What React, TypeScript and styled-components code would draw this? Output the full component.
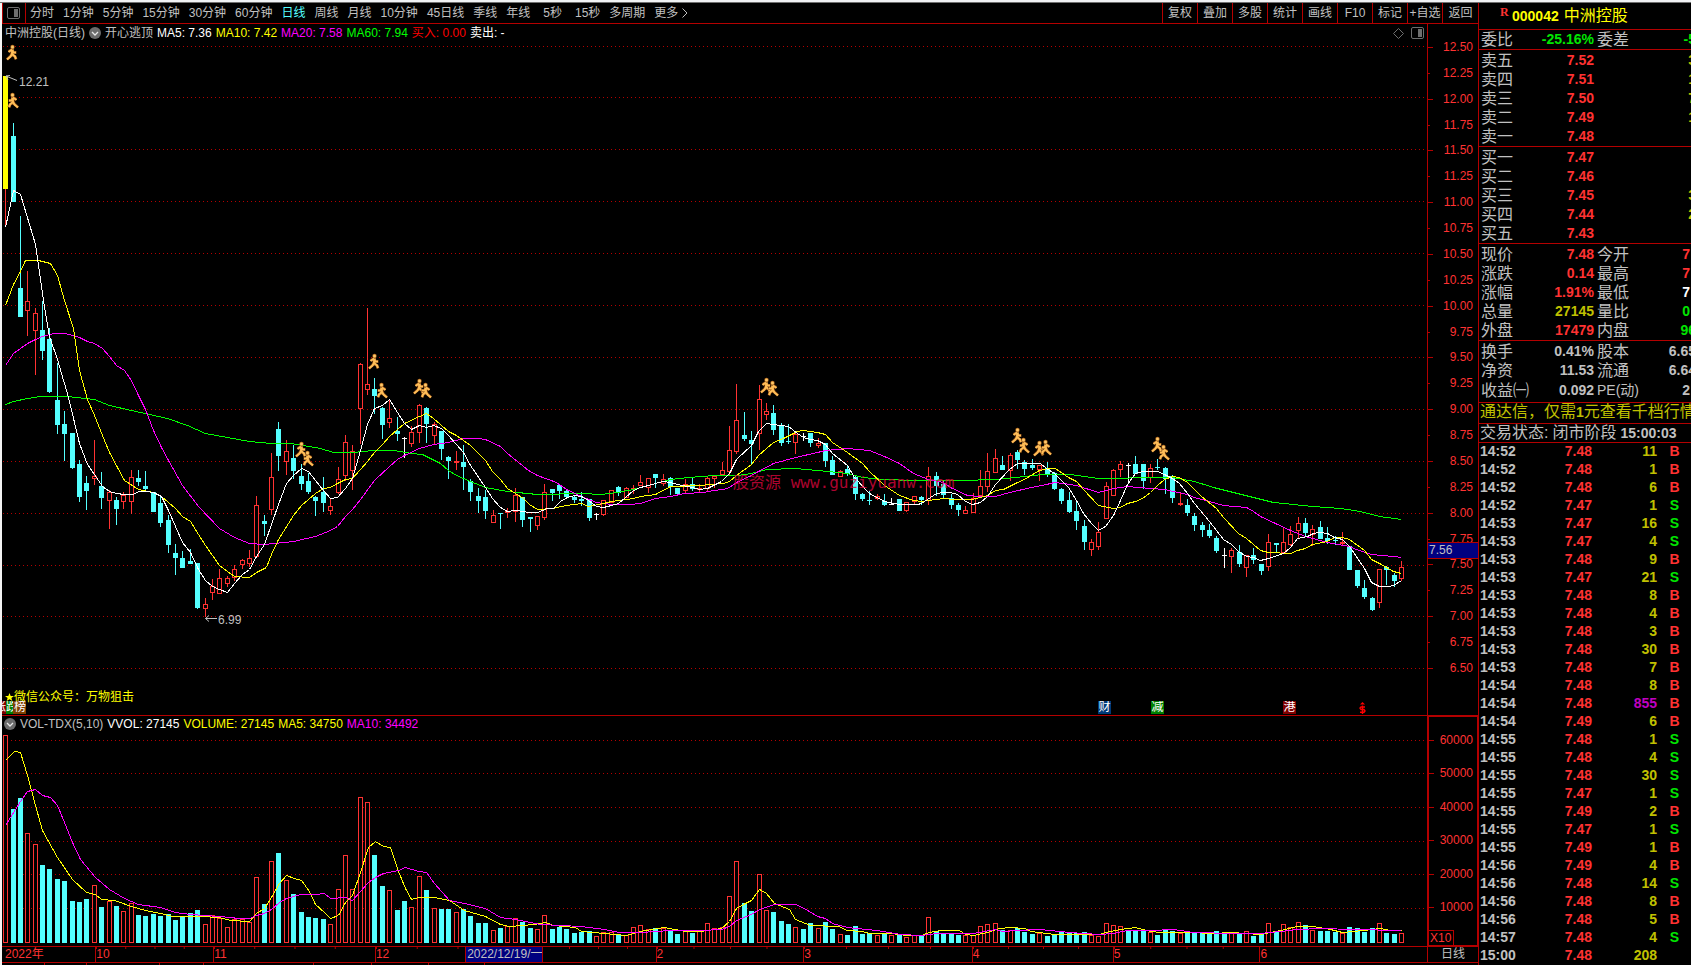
import React from "react";
import styled, { createGlobalStyle } from "styled-components";

const c = {
  line: "#b40000",
  grid: "#b40000",
  up: "#ff3232",
  down: "#54ffff",
  text: "#c0c0c0",
  yellow: "#ffff00",
  amount: "#c0c000",
  magenta: "#ff00ff",
  green: "#00e600",
  lime: "#00ff00",
};

const Global = createGlobalStyle`
  * { box-sizing: border-box; }
  html, body, #root { height: 100%; }
  body {
    margin: 0;
    background: #000;
    color: ${c.text};
    font: 12px/16px "Liberation Sans", "Noto Sans CJK SC", sans-serif;
    overflow: hidden;
  }
`;

/* ---------- market data ---------- */

type Kind = "u" | "d" | "n" | "p" | "y";
// kind, high, body top, body bottom, low, volume top
type Day = [Kind, number, number, number, number, number];

const days: Day[] = [
  ["y", 76, 76, 189, 225, 735], ["d", 123, 136, 202, 202, 809], ["d", 216, 288, 317, 317, 798],
  ["u", 271, 301, 311, 336, 833], ["u", 308, 313, 331, 375, 844], ["d", 301, 330, 351, 360, 865],
  ["d", 328, 339, 392, 393, 869], ["d", 363, 400, 425, 434, 879], ["d", 411, 424, 434, 461, 881],
  ["d", 433, 433, 468, 469, 901], ["d", 460, 464, 497, 502, 902], ["d", 476, 483, 491, 510, 899],
  ["u", 440, 476, 479, 485, 885], ["d", 472, 486, 498, 509, 907], ["u", 490, 492, 501, 529, 901],
  ["d", 497, 500, 509, 525, 906], ["u", 492, 495, 502, 509, 911], ["u", 470, 477, 502, 514, 903],
  ["d", 470, 478, 482, 486, 915], ["d", 471, 486, 489, 490, 916], ["d", 492, 492, 512, 512, 914],
  ["d", 496, 503, 523, 527, 916], ["d", 515, 520, 545, 553, 914], ["d", 544, 553, 558, 575, 920],
  ["d", 551, 558, 568, 568, 917], ["d", 549, 561, 564, 564, 913], ["d", 563, 563, 608, 609, 910],
  ["u", 598, 604, 609, 617, 924], ["u", 579, 586, 593, 600, 915], ["u", 569, 578, 594, 594, 918],
  ["u", 576, 578, 584, 587, 927], ["u", 565, 569, 578, 581, 919], ["u", 559, 560, 565, 569, 919],
  ["u", 550, 558, 564, 567, 922], ["u", 496, 505, 557, 557, 877], ["d", 515, 521, 524, 536, 904],
  ["u", 453, 477, 510, 515, 861], ["d", 422, 429, 456, 471, 853], ["u", 440, 451, 462, 475, 880],
  ["d", 445, 458, 471, 479, 894], ["d", 464, 476, 484, 490, 912], ["d", 473, 481, 492, 494, 917],
  ["d", 496, 497, 501, 516, 918], ["d", 477, 492, 503, 512, 919], ["u", 499, 506, 511, 515, 924],
  ["u", 467, 479, 493, 494, 889], ["u", 435, 442, 476, 481, 855], ["u", 445, 451, 471, 490, 889],
  ["u", 363, 364, 409, 444, 797], ["u", 308, 384, 390, 395, 802], ["d", 378, 389, 396, 414, 855],
  ["d", 407, 408, 425, 439, 886], ["u", 399, 418, 423, 428, 890], ["d", 417, 431, 434, 441, 910],
  ["n", 437, 438, 439, 458, 901], ["u", 426, 432, 444, 447, 907], ["u", 404, 405, 433, 443, 876],
  ["d", 407, 408, 424, 443, 890], ["u", 422, 424, 436, 444, 908], ["d", 431, 431, 449, 460, 909],
  ["d", 456, 457, 461, 479, 909], ["u", 451, 461, 463, 470, 912], ["d", 445, 462, 467, 490, 909],
  ["d", 479, 481, 492, 501, 916], ["d", 488, 496, 501, 513, 923], ["d", 490, 497, 511, 519, 923],
  ["u", 510, 515, 523, 523, 930], ["d", 513, 513, 514, 529, 928], ["u", 508, 511, 513, 518, 926],
  ["u", 488, 495, 512, 522, 918], ["d", 497, 497, 520, 527, 922], ["d", 517, 517, 519, 532, 928],
  ["u", 516, 516, 526, 530, 929], ["u", 484, 492, 518, 520, 915], ["d", 489, 489, 493, 501, 929],
  ["d", 484, 485, 491, 499, 927], ["d", 489, 491, 497, 499, 929], ["d", 495, 497, 500, 503, 933],
  ["d", 492, 499, 501, 506, 932], ["d", 499, 499, 518, 521, 931], ["p", 513, 514, 515, 520, 936],
  ["u", 500, 500, 515, 516, 932], ["u", 490, 490, 503, 503, 932], ["d", 486, 487, 493, 496, 935],
  ["u", 487, 488, 498, 498, 935], ["u", 485, 488, 490, 494, 927], ["u", 475, 482, 486, 486, 925],
  ["u", 478, 478, 488, 493, 929], ["d", 474, 474, 478, 488, 928], ["u", 474, 479, 484, 486, 928],
  ["d", 477, 478, 487, 495, 930], ["d", 488, 488, 494, 496, 934], ["u", 479, 484, 491, 494, 931],
  ["d", 477, 484, 489, 491, 933], ["u", 484, 488, 490, 493, 931], ["u", 476, 478, 489, 492, 923],
  ["u", 475, 476, 479, 488, 928], ["u", 462, 470, 475, 475, 927], ["u", 426, 450, 472, 475, 896],
  ["u", 384, 420, 452, 454, 861], ["d", 412, 435, 439, 441, 903], ["d", 431, 440, 444, 465, 911],
  ["u", 385, 399, 434, 450, 874], ["u", 403, 411, 415, 420, 910], ["d", 405, 413, 430, 435, 912],
  ["d", 423, 425, 443, 446, 921], ["d", 424, 441, 442, 444, 924], ["u", 432, 434, 443, 454, 927],
  ["n", 433, 436, 437, 441, 929], ["d", 433, 433, 443, 447, 923], ["u", 438, 443, 446, 448, 928],
  ["d", 443, 443, 461, 467, 922], ["d", 456, 460, 475, 475, 929], ["u", 470, 471, 477, 477, 934],
  ["d", 466, 469, 474, 476, 935], ["d", 476, 477, 494, 500, 926], ["d", 493, 494, 499, 501, 934],
  ["d", 491, 500, 501, 505, 933], ["u", 494, 496, 499, 500, 935], ["d", 494, 501, 505, 506, 934],
  ["p", 498, 504, 505, 505, 935], ["d", 499, 499, 511, 511, 935], ["u", 502, 502, 511, 512, 937],
  ["u", 496, 496, 502, 505, 935], ["d", 496, 497, 500, 505, 936], ["u", 467, 476, 501, 505, 917],
  ["d", 472, 476, 486, 496, 931], ["d", 481, 484, 495, 499, 933], ["d", 494, 498, 505, 509, 933],
  ["d", 503, 505, 510, 516, 935], ["u", 506, 510, 514, 514, 935], ["u", 493, 498, 513, 513, 935],
  ["u", 470, 486, 496, 497, 926], ["u", 453, 471, 487, 492, 924], ["u", 449, 458, 473, 473, 923],
  ["d", 456, 465, 470, 470, 930], ["u", 453, 455, 471, 481, 930], ["d", 450, 452, 460, 469, 928],
  ["d", 460, 462, 469, 475, 932], ["d", 459, 465, 468, 470, 934], ["u", 465, 465, 470, 481, 933],
  ["d", 462, 468, 474, 477, 936], ["d", 472, 473, 489, 490, 934], ["d", 488, 489, 501, 504, 932],
  ["d", 492, 500, 512, 513, 933], ["d", 501, 511, 521, 530, 933], ["d", 520, 526, 542, 550, 932],
  ["u", 539, 542, 550, 556, 935], ["u", 522, 532, 547, 550, 936], ["u", 482, 486, 519, 519, 923],
  ["u", 469, 470, 496, 496, 925], ["u", 461, 464, 470, 477, 926], ["n", 463, 465, 466, 483, 931],
  ["d", 456, 464, 474, 474, 931], ["d", 464, 464, 481, 489, 931], ["u", 464, 468, 478, 483, 932],
  ["d", 459, 467, 468, 470, 935], ["d", 467, 468, 479, 494, 929], ["d", 475, 476, 498, 503, 931],
  ["u", 492, 503, 505, 506, 933], ["d", 499, 505, 513, 516, 933], ["d", 513, 516, 525, 531, 933],
  ["d", 522, 525, 530, 537, 933], ["d", 524, 530, 536, 538, 933], ["d", 536, 538, 551, 553, 931],
  ["n", 548, 555, 556, 568, 933], ["u", 548, 550, 557, 573, 933], ["d", 545, 552, 564, 567, 933],
  ["u", 555, 555, 568, 577, 931], ["d", 548, 555, 560, 564, 936], ["d", 564, 564, 571, 575, 934],
  ["u", 534, 542, 567, 571, 923], ["d", 543, 543, 545, 553, 932], ["u", 528, 542, 553, 553, 924],
  ["u", 526, 534, 545, 546, 927], ["u", 517, 523, 531, 539, 922], ["d", 518, 523, 533, 536, 925],
  ["u", 525, 529, 535, 546, 930], ["d", 521, 527, 539, 539, 931], ["d", 527, 538, 541, 544, 931],
  ["d", 536, 540, 541, 545, 932], ["u", 532, 542, 544, 545, 933], ["d", 546, 546, 570, 570, 927],
  ["d", 570, 570, 586, 588, 928], ["d", 580, 588, 597, 599, 932], ["d", 597, 598, 610, 611, 928],
  ["u", 569, 569, 603, 608, 923], ["d", 566, 567, 570, 585, 933], ["d", 573, 575, 581, 587, 934],
  ["u", 561, 567, 579, 581, 933],
];

const dayX = (i: number) => Math.floor(5.65 + 7.386 * i);

const ma5 =
  "5,227 13,190 20,194 35,244 43,300 49,336 57,359 68,397 79,443 87,464 94,474 102,486 109,491 116,493 124,494 133,494 138,491 145,491 153,492 161,496 168,510 182,542 190,552 198,569 205,580 212,586 219,589 227,592 234,583 242,574 249,569 256,556 264,544 278,504 286,483 293,475 301,468 308,471 315,480 323,490 330,498 337,497 345,488 352,478 360,450 367,424 374,408 382,405 389,399 397,412 404,423 411,429 419,425 426,427 433,425 441,428 448,435 463,452 470,465 485,487 492,498 500,507 507,511 515,510 523,511 528,512 537,512 547,508 553,508 560,501 567,497 574,495 581,496 588,500 596,506 603,507 611,505 618,503 625,497 633,490 640,487 648,485 655,483 662,481 670,482 677,484 692,487 699,489 707,488 721,481 729,473 736,459 751,445 758,431 766,423 780,425 788,426 797,433 803,437 810,439 817,440 825,444 832,453 847,465 854,477 869,493 884,501 899,504 917,504 921,503 930,497 936,493 943,492 950,492 957,494 965,501 972,504 980,502 987,496 995,484 1009,469 1017,463 1023,463 1040,463 1046,468 1054,473 1061,480 1068,487 1076,500 1083,513 1091,523 1098,530 1105,526 1113,515 1120,500 1127,484 1135,473 1142,471 1157,471 1164,474 1172,478 1179,483 1187,493 1194,503 1209,521 1223,539 1231,544 1238,551 1246,556 1253,557 1260,560 1268,558 1283,553 1290,547 1297,538 1307,536 1313,533 1319,532 1327,533 1334,537 1342,539 1349,546 1364,568 1371,582 1379,586 1388,586 1393,585 1401,580";
const ma10 =
  "5,305 13,284 20,271 25,260 38,260 50,263 57,275 64,300 73,328 79,370 87,399 94,415 102,435 109,452 124,480 138,489 153,492 161,496 175,508 182,516 190,521 198,534 205,545 219,565 227,571 234,576 249,577 256,572 266,567 271,554 278,539 293,515 301,505 315,493 323,488 330,487 337,483 345,479 352,478 367,461 374,452 382,444 389,436 404,423 419,416 426,413 433,418 448,431 456,435 470,445 485,460 492,471 500,479 507,488 515,493 523,498 529,504 537,509 552,508 566,505 581,503 588,506 603,503 611,501 633,498 640,496 655,494 670,486 699,485 723,483 729,481 736,475 751,464 758,455 773,442 783,438 797,431 803,430 817,432 825,434 832,442 847,452 862,463 869,471 884,485 899,495 913,500 921,501 928,500 943,498 953,499 972,499 987,495 995,490 1003,489 1017,482 1024,479 1039,470 1048,468 1055,468 1068,477 1076,481 1083,489 1098,505 1113,508 1120,507 1127,503 1135,501 1142,498 1150,492 1157,485 1164,479 1172,476 1179,477 1187,482 1201,496 1216,508 1223,517 1238,533 1246,538 1260,550 1268,552 1290,553 1297,550 1305,548 1312,544 1327,541 1334,537 1342,537 1349,539 1364,550 1371,559 1379,563 1393,571 1401,573";
const ma20 =
  "5,365 13,353 27,343 35,339 42,336 53,333 65,333 79,337 87,341 94,343 102,348 109,356 116,365 124,370 131,380 138,395 145,409 153,430 161,447 168,460 182,485 198,506 219,528 234,537 249,543 264,544 293,541 315,536 330,530 337,526 345,516 352,509 360,499 374,480 389,466 397,459 404,455 419,448 433,444 448,442 463,438 478,438 485,439 500,446 507,453 528,470 537,475 556,482 566,489 581,496 596,502 611,504 629,504 640,503 655,498 670,496 684,493 703,492 713,490 723,489 729,487 736,482 751,475 758,471 773,463 795,457 817,452 825,450 847,448 869,450 884,456 899,463 913,473 928,479 943,482 950,487 967,495 980,496 995,496 1009,492 1031,487 1046,484 1054,482 1063,483 1076,485 1098,492 1113,488 1127,486 1150,488 1164,489 1187,494 1194,497 1209,501 1223,505 1246,507 1253,511 1260,516 1275,523 1290,530 1305,536 1327,542 1349,546 1356,549 1371,554 1393,556 1401,557";
const ma60 =
  "5,404 13,401 27,398 40,396 67,396 94,399 109,405 131,410 167,418 187,425 205,433 227,437 249,441 271,443 290,443 308,446 320,448 333,452 353,452 373,450 393,450 411,453 422,454 440,463 448,470 456,475 470,481 485,487 507,491 537,494 583,493 600,494 617,492 633,489 655,483 670,479 688,477 714,475 737,475 751,473 766,469 795,468 817,470 847,473 862,477 884,479 913,480 960,480 995,479 1024,476 1042,474 1070,474 1098,478 1120,478 1138,477 1172,477 1194,481 1213,487 1245,495 1273,502 1293,504 1312,506 1340,508 1360,511 1379,516 1401,519";
const vol5 =
  "5,760 14,751 20,752 27,775 35,805 42,830 57,857 72,879 86,892 95,894 101,899 114,900 131,906 145,910 160,913 173,916 200,916 219,917 230,920 249,921 256,913 264,908 271,897 279,883 286,875 294,878 301,880 309,891 315,904 324,912 330,918 338,915 345,902 352,895 360,872 368,847 375,841 383,846 390,847 398,871 405,888 411,899 418,897 434,897 449,900 464,910 485,916 500,924 509,926 534,924 545,922 553,925 575,927 581,931 604,933 626,935 640,931 664,927 685,931 700,931 721,928 729,921 736,908 745,903 751,900 759,889 766,893 774,903 789,909 795,919 810,925 838,926 847,930 862,931 869,933 891,933 906,935 921,935 929,932 940,930 959,930 965,934 973,935 987,932 999,928 1010,927 1024,928 1031,931 1054,934 1076,934 1099,934 1105,932 1120,929 1135,927 1150,931 1160,932 1190,932 1213,933 1231,932 1260,934 1280,930 1297,926 1312,926 1330,929 1342,932 1363,930 1380,928 1390,930 1401,930";
const vol10 =
  "5,825 20,801 27,791 35,789 42,795 50,797 57,805 64,822 72,842 80,859 95,877 109,889 124,898 138,904 160,907 175,912 190,914 219,916 239,918 249,918 256,915 264,913 271,909 279,902 286,898 300,894 315,894 324,893 330,898 345,897 352,900 360,891 368,882 375,877 383,873 398,870 405,867 418,871 426,872 434,883 449,900 464,903 485,908 500,917 515,919 540,924 581,926 604,929 619,932 640,932 670,930 700,930 721,929 729,926 736,920 751,914 759,909 774,904 795,904 804,908 817,916 825,918 832,923 847,927 876,930 900,934 921,935 936,933 973,933 995,929 1002,931 1017,930 1039,929 1069,932 1099,934 1113,933 1127,930 1150,930 1173,929 1193,932 1233,933 1260,933 1280,931 1297,929 1320,928 1353,929 1401,930";

const priceGrid = [46, 97, 149, 201, 253, 305, 357, 409, 461, 513, 565, 616, 668];
const volumeGrid = [740, 773, 807, 841, 874, 908];

// centre of each figure and the way it runs
const runners: [number, number, boolean][] = [
  [12, 53, false], [13, 101, true], [301, 450, false], [308, 459, true], [374, 362, false],
  [382, 391, true], [419, 387, false], [426, 391, true], [766, 386, false], [773, 389, true],
  [1017, 436, false], [1024, 446, true], [1039, 449, false], [1046, 448, true],
  [1157, 445, false], [1164, 453, true],
];

const periods = [
  "分时", "1分钟", "5分钟", "15分钟", "30分钟", "60分钟", "日线", "周线", "月线",
  "10分钟", "45日线", "季线", "年线", "5秒", "15秒", "多周期",
];
const tools = ["复权", "叠加", "多股", "统计", "画线", "F10", "标记", "+自选", "返回"];

const months: { label: string; span: number; ticks: boolean }[] = [
  { label: "2022年", span: 91, ticks: false },
  { label: "10", span: 118, ticks: true },
  { label: "11", span: 162, ticks: true },
  { label: "12", span: 165, ticks: true },
  { label: "", span: 116, ticks: true },
  { label: "2", span: 148, ticks: true },
  { label: "3", span: 169, ticks: true },
  { label: "4", span: 141, ticks: true },
  { label: "5", span: 147, ticks: true },
  { label: "6", span: 168, ticks: false },
];

const sells: [string, string, string][] = [
  ["卖五", "7.52", "3"], ["卖四", "7.51", "1"], ["卖三", "7.50", "7"], ["卖二", "7.49", "1"], ["卖一", "7.48", ""],
];
const buys: [string, string, string][] = [
  ["买一", "7.47", ""], ["买二", "7.46", ""], ["买三", "7.45", "3"], ["买四", "7.44", "2"], ["买五", "7.43", ""],
];

interface Fact {
  name: string;
  value: string;
  color: string;
  name2: string;
  value2: string;
  color2: string;
  cut?: boolean;
}
const ratio: Fact[] = [
  { name: "委比", value: "-25.16%", color: c.green, name2: "委差", value2: "-5", color2: c.green, cut: true },
];
const facts: Fact[] = [
  { name: "现价", value: "7.48", color: c.up, name2: "今开", value2: "7", color2: c.up },
  { name: "涨跌", value: "0.14", color: c.up, name2: "最高", value2: "7", color2: c.up },
  { name: "涨幅", value: "1.91%", color: c.up, name2: "最低", value2: "7", color2: "#fff" },
  { name: "总量", value: "27145", color: c.amount, name2: "量比", value2: "0", color2: c.green },
  { name: "外盘", value: "17479", color: c.up, name2: "内盘", value2: "96", color2: c.green, cut: true },
];
const capital: Fact[] = [
  { name: "换手", value: "0.41%", color: c.text, name2: "股本", value2: "6.65", color2: c.text, cut: true },
  { name: "净资", value: "11.53", color: c.text, name2: "流通", value2: "6.64", color2: c.text, cut: true },
  { name: "收益㈠", value: "0.092", color: c.text, name2: "PE(动)", value2: "2", color2: c.text },
];

const trades: [string, string, string, string][] = [
  ["14:52", "7.48", "11", "B"], ["14:52", "7.48", "1", "B"], ["14:52", "7.48", "6", "B"], ["14:52", "7.47", "1", "S"],
  ["14:53", "7.47", "16", "S"], ["14:53", "7.47", "4", "S"], ["14:53", "7.48", "9", "B"], ["14:53", "7.47", "21", "S"],
  ["14:53", "7.48", "8", "B"], ["14:53", "7.48", "4", "B"], ["14:53", "7.48", "3", "B"], ["14:53", "7.48", "30", "B"],
  ["14:53", "7.48", "7", "B"], ["14:54", "7.48", "8", "B"], ["14:54", "7.48", "855", "B"], ["14:54", "7.49", "6", "B"],
  ["14:55", "7.48", "1", "S"], ["14:55", "7.48", "4", "S"], ["14:55", "7.48", "30", "S"], ["14:55", "7.47", "1", "S"],
  ["14:55", "7.49", "2", "B"], ["14:55", "7.47", "1", "S"], ["14:55", "7.49", "1", "B"], ["14:56", "7.49", "4", "B"],
  ["14:56", "7.48", "14", "S"], ["14:56", "7.48", "8", "B"], ["14:56", "7.48", "5", "B"], ["14:57", "7.48", "4", "S"],
  ["15:00", "7.48", "208", ""],
];

/* ---------- frame ---------- */

const Shell = styled.div`
  display: flex;
  flex-direction: column;
  height: 100%;
`;
const TopEdge = styled.div`
  flex: none;
  height: 3px;
  background: #f0f2f4;
  border-bottom: 1px solid #707070;
`;
const Work = styled.div`
  flex: 1;
  min-height: 0;
  display: flex;
  border-left: 2px solid #f4f4f4;
`;
const Main = styled.main`
  flex: 1;
  min-width: 0;
  display: flex;
  flex-direction: column;
`;

const Toolbar = styled.nav`
  flex: none;
  display: flex;
  height: 21px;
  border-bottom: 1px solid ${c.line};
  border-left: 1px solid ${c.line};
`;
const IconButton = styled.button`
  width: 23px;
  padding: 0 0 0 4px;
  border: 0;
  border-right: 1px solid ${c.line};
  background: none;
  display: flex;
  align-items: center;
`;
const Periods = styled.div`
  flex: 1;
  min-width: 0;
  display: flex;
  align-items: center;
  gap: 9px;
  padding-left: 4px;
  overflow: hidden;
`;
const PeriodButton = styled.button<{ $on?: boolean; $wide?: boolean }>`
  flex: none;
  display: flex;
  align-items: center;
  gap: 4px;
  padding: 0 0 0 ${(p) => (p.$wide ? 4 : 0)}px;
  border: 0;
  background: none;
  font: inherit;
  color: ${(p) => (p.$on ? c.down : c.text)};
`;
const Tools = styled.div`
  flex: none;
  display: flex;
`;
const ToolButton = styled.button`
  width: 35px;
  padding: 0;
  border: 0;
  border-left: 1px solid ${c.line};
  background: none;
  font: inherit;
  color: ${c.text};
  white-space: nowrap;
  &:last-child {
    width: 36px;
  }
`;

const Pane = styled.section<{ $fixed?: number }>`
  display: flex;
  flex: ${(p) => (p.$fixed ? "none" : "1")};
  height: ${(p) => (p.$fixed ? `${p.$fixed}px` : "auto")};
  min-height: 0;
  border-bottom: 1px solid ${c.line};
`;
const Plot = styled.div`
  position: relative;
  flex: 1;
  min-width: 0;
  overflow: hidden;
`;
const PlotSvg = styled.svg`
  display: block;
  width: 100%;
  height: 100%;
`;
const Legend = styled.div<{ $inset: number; $height: number }>`
  position: absolute;
  top: 0;
  left: ${(p) => p.$inset}px;
  right: 3px;
  height: ${(p) => p.$height}px;
  display: flex;
  align-items: center;
  gap: 4px;
  white-space: nowrap;
`;
const Tint = styled.span<{ $color?: string }>`
  color: ${(p) => p.$color ?? c.text};
`;
const LegendTools = styled.span`
  display: flex;
  align-items: center;
  gap: 7px;
  margin-left: auto;
`;
const Mark = styled.span<{ $x: number; $y: number }>`
  position: absolute;
  left: ${(p) => ((p.$x - 2) / 1425) * 100}%;
  top: ${(p) => ((p.$y - 24) / 691) * 100}%;
  transform: translateY(-50%);
  white-space: nowrap;
`;
const Watermark = styled(Mark)`
  font: 16px/20px "DejaVu Sans Mono", "Noto Sans CJK SC", monospace;
  color: #d8063c;
  opacity: 0.8;
`;
const Events = styled.div`
  position: absolute;
  left: 0;
  right: 0;
  bottom: 1px;
  height: 13px;
`;
const Badge = styled.span<{ $x: number; $bg?: string; $color?: string }>`
  position: absolute;
  left: ${(p) => ((p.$x - 2) / 1425) * 100}%;
  width: 13px;
  height: 13px;
  overflow: hidden;
  background: ${(p) => p.$bg ?? "none"};
  color: ${(p) => p.$color ?? "#fff"};
  font-size: 12px;
  line-height: 13px;
  text-align: center;
`;
const Rank = styled.span`
  position: absolute;
  left: 0;
  bottom: 1px;
  height: 13px;
  display: flex;
  color: #fff;
  line-height: 13px;
`;
const RankPart = styled.span<{ $bg: string; $w: number; $start?: boolean }>`
  width: ${(p) => p.$w}px;
  overflow: hidden;
  background: ${(p) => p.$bg};
  display: flex;
  justify-content: ${(p) => (p.$start ? "flex-start" : "flex-end")};
`;
const Account = styled.p`
  position: absolute;
  left: 3px;
  bottom: 10px;
  margin: 0;
  display: flex;
  color: ${c.yellow};
`;

const Axis = styled.aside<{ $box?: boolean }>`
  position: relative;
  flex: none;
  width: 51px;
  display: flex;
  flex-direction: column;
  border-style: solid;
  border-color: ${c.line};
  border-width: ${(p) => (p.$box ? "1px 1px 1px 2px" : "0 0 0 1px")};
  padding: ${(p) => (p.$box ? "6px 0 21px" : "10px 0 34px")};
  color: ${c.up};
`;
const AxisLabel = styled.div<{ $minor?: boolean; $box?: boolean }>`
  position: relative;
  flex: 1;
  display: flex;
  align-items: center;
  justify-content: flex-end;
  padding-right: ${(p) => (p.$box ? 4 : 5)}px;
  &::before {
    content: "";
    position: absolute;
    left: 0;
    top: 50%;
    width: ${(p) => (p.$minor ? 2 : 5)}px;
    height: 1px;
    background: ${c.line};
  }
`;
const Cursor = styled.div`
  position: absolute;
  left: 0;
  right: 0;
  top: 75%;
  height: 17px;
  padding-left: 1px;
  border: solid ${c.line};
  border-width: 1px 0;
  background: #000080;
  color: ${c.text};
  line-height: 14px;
`;
const Scale = styled.span`
  position: absolute;
  left: 0;
  bottom: 0;
  width: 25px;
  height: 15px;
  border: solid ${c.line};
  border-width: 1px 1px 0 0;
  line-height: 14px;
  padding-left: 1px;
`;

const TimeRow = styled.div`
  flex: none;
  display: flex;
  height: 16px;
  border-bottom: 1px solid ${c.line};
  color: ${c.up};
`;
const Months = styled.div`
  position: relative;
  flex: 1;
  display: flex;
`;
const Month = styled.div<{ $span: number; $ticks: boolean }>`
  flex: ${(p) => p.$span} 1 0;
  min-width: 0;
  line-height: 15px;
  background: ${(p) => (p.$ticks ? `linear-gradient(90deg, ${c.line} 1px, transparent 1px) 0 0 / 25% 2px repeat-x` : "none")};
  &:first-child {
    padding-left: 3px;
  }
  & + & {
    border-left: 1px solid ${c.line};
  }
`;
const DateTag = styled.span`
  position: absolute;
  left: 32.5%;
  top: 0;
  width: 78px;
  height: 15px;
  padding-left: 1px;
  background: #000080;
  border: solid ${c.line};
  border-width: 0 1px;
  color: ${c.text};
  line-height: 14px;
  white-space: nowrap;
  overflow: hidden;
`;
const AxisFoot = styled.div`
  flex: none;
  width: 51px;
  border-left: 1px solid ${c.line};
  color: ${c.text};
  text-align: center;
  line-height: 15px;
`;
const TabEdge = styled.div`
  flex: none;
  height: 2px;
  display: flex;
`;
const TabSlot = styled.i<{ $w: number }>`
  width: ${(p) => p.$w}px;
  border-right: 1px solid ${c.line};
`;

/* ---------- quote panel ---------- */

const Quote = styled.aside`
  flex: none;
  width: 213px;
  overflow: hidden;
  border-left: 1px solid ${c.line};
  font-size: 16px;
  line-height: 18px;
`;
const Heading = styled.h1`
  display: flex;
  align-items: center;
  height: 27px;
  margin: 0;
  padding-left: 21px;
  border-bottom: 1px solid ${c.line};
  color: ${c.yellow};
  font-size: 16px;
  font-weight: 400;
`;
const Flag = styled.sup`
  width: 12px;
  font: bold 12px/12px "Liberation Serif", serif;
  color: ${c.up};
  align-self: flex-start;
  padding-top: 3px;
`;
const Num = styled.b`
  font-size: 14px;
`;
const Code = styled(Num)`
  margin-right: 5px;
`;
const Block = styled.div<{ $top: number; $bottom: number }>`
  padding: ${(p) => p.$top}px 0 ${(p) => p.$bottom}px;
  border-bottom: 1px solid ${c.line};
`;
const Grid = styled.table<{ $row: number }>`
  width: 100%;
  table-layout: fixed;
  border-collapse: collapse;
  td,
  th {
    height: ${(p) => p.$row}px;
    padding: 0;
    line-height: ${(p) => p.$row}px;
    font-weight: 400;
    text-align: left;
    white-space: nowrap;
    vertical-align: middle;
  }
`;
const TradeGrid = styled(Grid)`
  td,
  th {
    line-height: 16px;
    padding-bottom: 2px;
  }
`;
const Col = styled.col<{ $w?: number }>`
  width: ${(p) => (p.$w ? `${p.$w}px` : "auto")};
`;
const NameCell = styled.th`
  && {
    padding-left: 2px;
  }
`;
const ValueCell = styled.td<{ $color: string; $cut?: boolean; $center?: boolean }>`
  && {
    text-align: ${(p) => (p.$center ? "center" : "right")};
    font-size: 14px;
    font-weight: 700;
    color: ${(p) => p.$color};
    padding-right: ${(p) => (p.$cut || p.$center ? 0 : 1)}px;
  }
  & > span {
    margin-right: ${(p) => (p.$cut ? -5 : 0)}px;
  }
`;
const TimeCell = styled.th`
  && {
    padding-left: 1px;
    font-size: 14px;
    font-weight: 700;
  }
`;
const Small = styled.span`
  font-size: 14px;
`;
const Notice = styled.a`
  display: block;
  height: 21px;
  padding-left: 1px;
  border-bottom: 1px solid ${c.line};
  color: ${c.amount};
  line-height: 18px;
  text-decoration: none;
  white-space: nowrap;
  overflow: hidden;
`;
const Status = styled.p`
  display: flex;
  align-items: center;
  gap: 4px;
  height: 19px;
  margin: 0;
  padding: 0 0 1px 1px;
  border-bottom: 1px solid ${c.line};
  white-space: nowrap;
`;

/* ---------- drawings ---------- */

const PanelIcon = ({ color }: { color: string }) => (
  <svg width="13" height="12" viewBox="0 0 13 12" aria-hidden="true">
    <rect x="0.5" y="0.5" width="12" height="11" rx="1.5" fill="none" stroke={color} />
    <rect x="7" y="2" width="4" height="8" fill={color} />
  </svg>
);

const Chevron = () => (
  <svg width="12" height="12" viewBox="0 0 12 12" aria-hidden="true">
    <circle cx="6" cy="6" r="6" fill="#6c6c6c" />
    <path d="M3 5l3 3 3-3" fill="none" stroke="#e8e8e8" strokeWidth="1.3" />
  </svg>
);

const Runner = ({ x, y, flip }: { x: number; y: number; flip: boolean }) => (
  <g transform={`translate(${x} ${y}) scale(${flip ? -1 : 1} 1)`}>
    <path
      d="M0-3.5L-3.5-1.5M0.5-3.5L1-0.5 4.5-0.5M0-1L-1 2.5-5 6.5M-0.5 1.5L3 3.5 4 6.5"
      fill="none"
      stroke="#7a4010"
      strokeWidth="3"
    />
    <circle cx="0.5" cy="-6" r="2.2" fill="#b06a20" />
    <path
      d="M0-3.5L-3.5-1M0.5-3.5L1-0.5 4-0.5M0.3-3L0 1.5M0 1L-1.5 3.5-5 6.5M0 1L3 3.5 4 6"
      fill="none"
      stroke="#ffbe58"
      strokeWidth="2.1"
    />
    <circle cx="0.5" cy="-6" r="1.5" fill="#ffc868" />
  </g>
);

const GridLines = ({ rows }: { rows: number[] }) => (
  <g stroke={c.grid} strokeDasharray="1 3">
    {rows.map((y) => (
      <line key={y} x1="3" x2="1424" y1={y + 0.5} y2={y + 0.5} />
    ))}
  </g>
);

const Candle = ({ day, x }: { day: Day; x: number }) => {
  const [kind, high, top, bottom, low] = day;
  if (kind === "n" || kind === "p") {
    return (
      <g fill="#fff">
        <rect x={x} y={high} width="1" height={low - high} />
        <rect x={x - 2} y={top} width="5" height="1" />
      </g>
    );
  }
  if (kind === "y") {
    return (
      <g>
        <rect x={x - 2} y={top} width="5" height={bottom - top} fill={c.yellow} />
        <rect x={x} y={bottom} width="1" height={low - bottom} fill={c.up} />
      </g>
    );
  }
  const solid = kind === "d" || bottom - top < 3;
  const color = kind === "d" ? c.down : c.up;
  return (
    <g>
      <rect x={x} y={high} width="1" height={Math.max(low - high, 1)} fill={color} />
      {solid ? (
        <rect x={x - 2} y={top} width="5" height={bottom - top} fill={color} />
      ) : (
        <rect x={x - 1.5} y={top + 0.5} width="4" height={bottom - top - 1} fill="#000" stroke={color} />
      )}
    </g>
  );
};

const Curve = ({ points, color }: { points: string; color: string }) => (
  <polyline points={points} fill="none" stroke={color} transform="translate(0.5 0.5)" />
);

const PriceChart = () => (
  <PlotSvg viewBox="2 24 1425 691" preserveAspectRatio="none" role="img" aria-label="中洲控股日线">
    <g shapeRendering="crispEdges">
      <GridLines rows={priceGrid} />
      {days.map((day, i) => (
        <Candle key={i} day={day} x={dayX(i)} />
      ))}
      <Curve points={ma60} color={c.lime} />
      <Curve points={ma20} color={c.magenta} />
      <Curve points={ma10} color={c.yellow} />
      <Curve points={ma5} color="#fff" />
    </g>
    {runners.map(([x, y, flip]) => (
      <Runner key={x} x={x} y={y} flip={flip} />
    ))}
    <path d="M17 80.5L6 76M10 75.5L6 76 8 80" fill="none" stroke={c.text} />
    <path d="M217 618.5H205.5M209 615.5L205.5 618.5 209 621.5" fill="none" stroke={c.text} />
  </PlotSvg>
);

const VolumeChart = () => (
  <PlotSvg viewBox="2 716 1425 230" preserveAspectRatio="none" role="img" aria-label="成交量">
    <g shapeRendering="crispEdges">
      <GridLines rows={volumeGrid} />
      {days.map(([kind, , , , , top], i) =>
        kind === "d" || kind === "n" ? (
          <rect key={i} x={dayX(i) - 2} y={top} width="5" height={943 - top} fill={c.down} />
        ) : (
          <rect key={i} x={dayX(i) - 1.5} y={top + 0.5} width="4" height={942 - top} fill="#000" stroke={c.up} />
        ),
      )}
      <Curve points={vol5} color={c.yellow} />
      <Curve points={vol10} color={c.magenta} />
    </g>
  </PlotSvg>
);

const FactTable = ({ rows }: { rows: Fact[] }) => (
  <Grid $row={19}>
    <colgroup>
      <Col $w={52} />
      <Col $w={64} />
      <Col $w={50} />
      <Col />
    </colgroup>
    <tbody>
      {rows.map((r) => (
        <tr key={r.name}>
          <NameCell scope="row">{r.name}</NameCell>
          <ValueCell $color={r.color}>{r.value}</ValueCell>
          <NameCell scope="row">{r.name2.startsWith("PE") ? <Small>{r.name2}</Small> : r.name2}</NameCell>
          <ValueCell $color={r.color2} $cut={r.cut}>
            <span>{r.value2}</span>
          </ValueCell>
        </tr>
      ))}
    </tbody>
  </Grid>
);

const DepthTable = ({ rows }: { rows: [string, string, string][] }) => (
  <Grid $row={19}>
    <colgroup>
      <Col $w={52} />
      <Col $w={64} />
      <Col />
    </colgroup>
    <tbody>
      {rows.map(([name, price, amount]) => (
        <tr key={name}>
          <NameCell scope="row">{name}</NameCell>
          <ValueCell $color={c.up}>{price}</ValueCell>
          <ValueCell $color={c.amount} $cut>
            <span>{amount}</span>
          </ValueCell>
        </tr>
      ))}
    </tbody>
  </Grid>
);

const priceLabels = Array.from({ length: 25 }, (_, i) => (12.5 - i * 0.25).toFixed(2));
const volumeLabels = ["60000", "50000", "40000", "30000", "20000", "10000"];

export default function App() {
  return (
    <>
      <Global />
      <Shell>
        <TopEdge />
        <Work>
          <Main>
            <Toolbar>
              <IconButton type="button" aria-label="侧栏">
                <PanelIcon color="#6e6e6e" />
              </IconButton>
              <Periods>
                {periods.map((p) => (
                  <PeriodButton key={p} type="button" $on={p === "日线"} $wide={p.endsWith("秒")} aria-pressed={p === "日线"}>
                    {p}
                  </PeriodButton>
                ))}
                <PeriodButton type="button">
                  更多
                  <svg width="6" height="10" viewBox="0 0 6 10" aria-hidden="true">
                    <path d="M0.5 0.5L5 5 0.5 9.5" fill="none" stroke={c.text} />
                  </svg>
                </PeriodButton>
              </Periods>
              <Tools>
                {tools.map((t) => (
                  <ToolButton key={t} type="button">
                    {t}
                  </ToolButton>
                ))}
              </Tools>
            </Toolbar>

            <Pane>
              <Plot>
                <PriceChart />
                <Legend $inset={3} $height={18}>
                  <Tint>中洲控股(日线)</Tint>
                  <Chevron />
                  <Tint>开心逃顶</Tint>
                  <Tint $color="#fff">MA5: 7.36</Tint>
                  <Tint $color={c.yellow}>MA10: 7.42</Tint>
                  <Tint $color={c.magenta}>MA20: 7.58</Tint>
                  <Tint $color={c.lime}>MA60: 7.94</Tint>
                  <Tint $color="#ff0000">买入: 0.00</Tint>
                  <Tint $color="#fff">卖出: -</Tint>
                  <LegendTools>
                    <svg width="11" height="11" viewBox="0 0 11 11" aria-hidden="true">
                      <path d="M5.5 0.5L10.5 5.5 5.5 10.5 0.5 5.5Z" fill="none" stroke="#6e6e6e" />
                    </svg>
                    <PanelIcon color="#6e6e6e" />
                  </LegendTools>
                </Legend>
                <Mark $x={19} $y={82}>12.21</Mark>
                <Mark $x={218} $y={620}>6.99</Mark>
                <Watermark $x={733} $y={483}>股资源 www.guziyuanw.com</Watermark>
                <Account>
                  <svg width="9" height="16" viewBox="0 0 9 16" aria-hidden="true">
                    <path d="M4.5 4L5.7 7H9L6.4 9 7.3 12 4.5 10.2 1.7 12 2.6 9 0 7H3.3Z" fill={c.yellow} />
                  </svg>
                  微信公众号：万物狙击
                </Account>
                <Rank>
                  <RankPart $bg="#800000" $w={4}>涨</RankPart>
                  <RankPart $bg="#008000" $w={7} $start>跌</RankPart>
                  <RankPart $bg="#804000" $w={13}>榜</RankPart>
                </Rank>
                <Events>
                  <Badge $x={1098} $bg="#003a78">财</Badge>
                  <Badge $x={1151} $bg="#008000">减</Badge>
                  <Badge $x={1283} $bg="#800000">港</Badge>
                  <Badge $x={1356} $color="#ff0000">
                    <svg width="7" height="13" viewBox="0 0 7 13" aria-hidden="true">
                      <path d="M1 3.5L3.5 1 6 3.5Z" fill="#f00" />
                      <path d="M6 6H2L1 7 2 8.5H5L6 10 5 11.2H1M3.5 4.5V13" fill="none" stroke="#f00" strokeWidth="1.4" />
                    </svg>
                  </Badge>
                </Events>
              </Plot>
              <Axis>
                {priceLabels.map((v, i) => (
                  <AxisLabel key={v} $minor={i % 2 === 1}>
                    {v}
                  </AxisLabel>
                ))}
                <Cursor>7.56</Cursor>
              </Axis>
            </Pane>

            <Pane $fixed={231}>
              <Plot>
                <VolumeChart />
                <Legend $inset={2} $height={16}>
                  <Chevron />
                  <Tint>VOL-TDX(5,10)</Tint>
                  <Tint $color="#fff">VVOL: 27145</Tint>
                  <Tint $color={c.yellow}>VOLUME: 27145</Tint>
                  <Tint $color={c.yellow}>MA5: 34750</Tint>
                  <Tint $color={c.magenta}>MA10: 34492</Tint>
                </Legend>
              </Plot>
              <Axis $box>
                {volumeLabels.map((v) => (
                  <AxisLabel key={v} $box>
                    {v}
                  </AxisLabel>
                ))}
                <Scale>X10</Scale>
              </Axis>
            </Pane>

            <TimeRow>
              <Months>
                {months.map((m) => (
                  <Month key={m.label} $span={m.span} $ticks={m.ticks}>
                    {m.label}
                  </Month>
                ))}
                <DateTag>2022/12/19/一</DateTag>
              </Months>
              <AxisFoot>日线</AxisFoot>
            </TimeRow>
            <TabEdge>
              {[43, 42, 73, 44, 110, 58, 57, 56].map((w) => (
                <TabSlot key={w} $w={w} />
              ))}
            </TabEdge>
          </Main>

          <Quote>
            <Heading>
              <Flag>R</Flag>
              <Code>000042</Code>
              中洲控股
            </Heading>
            <Block $top={0} $bottom={0}>
              <FactTable rows={ratio} />
            </Block>
            <Block $top={1} $bottom={0}>
              <DepthTable rows={sells} />
            </Block>
            <Block $top={1} $bottom={0}>
              <DepthTable rows={buys} />
            </Block>
            <Block $top={1} $bottom={0}>
              <FactTable rows={facts} />
            </Block>
            <Block $top={1} $bottom={2}>
              <FactTable rows={capital} />
            </Block>
            <Notice href="#depth">
              通达信，仅需<Num>1</Num>元查看千档行情
            </Notice>
            <Status>
              <span>交易状态:</span>
              <span>闭市阶段</span>
              <Num>15:00:03</Num>
            </Status>
            <TradeGrid $row={18}>
              <colgroup>
                <Col $w={54} />
                <Col $w={60} />
                <Col $w={65} />
                <Col />
              </colgroup>
              <tbody>
                {trades.map(([time, price, amount, side], i) => (
                  <tr key={i}>
                    <TimeCell scope="row">{time}</TimeCell>
                    <ValueCell $color={c.up}>{price}</ValueCell>
                    <ValueCell $color={amount === "855" ? "#c000c0" : c.amount}>{amount}</ValueCell>
                    <ValueCell $color={side === "B" ? c.up : c.green} $center>
                      {side}
                    </ValueCell>
                  </tr>
                ))}
              </tbody>
            </TradeGrid>
          </Quote>
        </Work>
      </Shell>
    </>
  );
}
